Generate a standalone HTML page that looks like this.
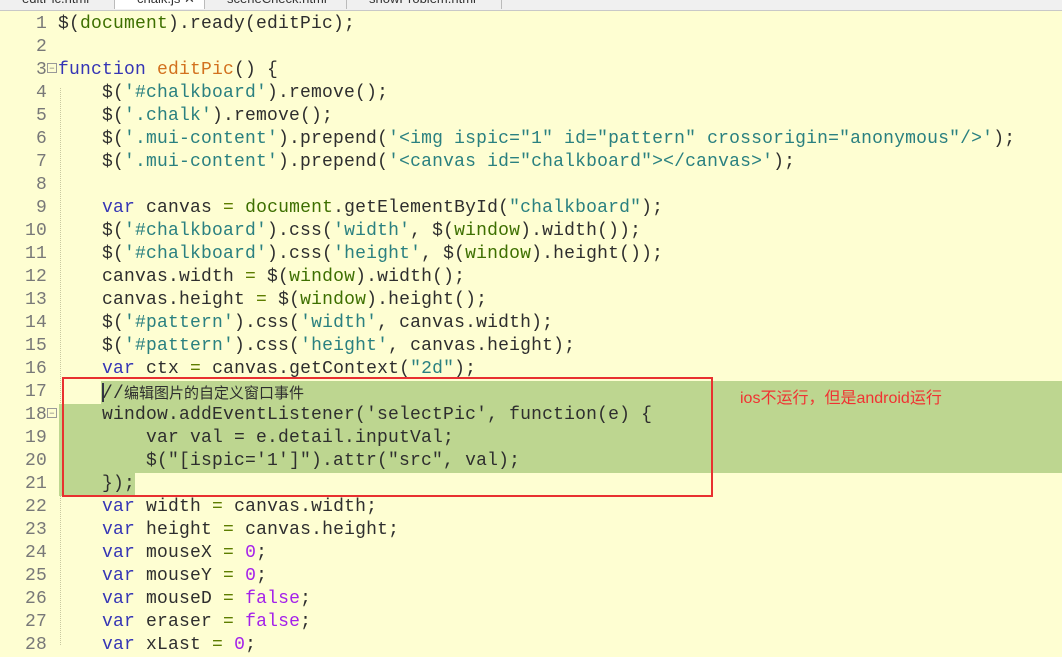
<!DOCTYPE html>
<html><head><meta charset="utf-8"><style>
body{margin:0;width:1062px;height:645px;overflow:hidden;background:#fefed2;position:relative;font-family:"Liberation Mono",monospace;}
.tabs{position:absolute;left:0;top:0;width:1062px;height:10px;background:#f0f0f0;border-bottom:1px solid #c8c8c8;overflow:hidden}
.tab{position:absolute;top:-9px;height:18px;font:13px "Liberation Sans",sans-serif;color:#333;border-right:1px solid #bbb;padding-left:22px;box-sizing:border-box}
.tab.a{background:#fff}
.l{position:absolute;left:0;height:23px;line-height:23px;font-size:18px;white-space:pre;letter-spacing:0.2px;color:#2e2e2e;width:1062px}
.n{display:inline-block;width:47px;text-align:right;color:#787878}
.c{position:absolute;left:58px;top:0}
.k{color:#3535b5}.s{color:#2a8080}.g{color:#3d6f00}.o{color:#5d7d00}.p{color:#a421ea}.f{color:#d2711e}
.hl{position:absolute;background:#bdd690}
.guide{position:absolute;left:60px;top:88px;height:557px;border-left:1px dotted #c8c8a0}
</style></head><body>
<div class="tabs">
<div class="tab" style="left:0;width:115px">editPic.html</div>
<div class="tab a" style="left:115px;width:90px">chalk.js ✕</div>
<div class="tab" style="left:205px;width:142px">sceneCheck.html</div>
<div class="tab" style="left:347px;width:155px">showProblem.html</div>
</div>
<div class="guide"></div>
<div class="hl" style="left:101px;top:381px;width:961px;height:23px"></div>
<div class="hl" style="left:59px;top:404px;width:1003px;height:69px"></div>
<div class="hl" style="left:59px;top:473px;width:76px;height:23px"></div>
<div style="position:absolute;left:102px;top:383px;width:2px;height:19px;background:#334"></div>
<div style="position:absolute;left:62px;top:377px;width:647px;height:116px;border:2px solid #e83030"></div>
<div style="position:absolute;left:740px;top:384px;font:16px 'Liberation Sans','Noto Sans CJK SC',sans-serif;color:#f03232">ios不运行，但是android运行</div>

<div class="l" style="top:13px"><span class="n">1</span><span class="c">$(<span class="g">document</span>).ready(editPic);</span></div>
<div class="l" style="top:36px"><span class="n">2</span></div>
<div class="l" style="top:59px"><span class="n">3</span><span style="position:absolute;left:47px;top:4px;font:9px sans-serif;color:#777;border:1px solid #999;width:8px;height:8px;line-height:8px;text-align:center">−</span><span class="c"><span class="k">function</span> <span class="f">editPic</span>() {</span></div>
<div class="l" style="top:82px"><span class="n">4</span><span class="c">    $(<span class="s">'#chalkboard'</span>).remove();</span></div>
<div class="l" style="top:105px"><span class="n">5</span><span class="c">    $(<span class="s">'.chalk'</span>).remove();</span></div>
<div class="l" style="top:128px"><span class="n">6</span><span class="c">    $(<span class="s">'.mui-content'</span>).prepend(<span class="s">'&lt;img ispic="1" id="pattern" crossorigin="anonymous"/&gt;'</span>);</span></div>
<div class="l" style="top:151px"><span class="n">7</span><span class="c">    $(<span class="s">'.mui-content'</span>).prepend(<span class="s">'&lt;canvas id="chalkboard"&gt;&lt;/canvas&gt;'</span>);</span></div>
<div class="l" style="top:174px"><span class="n">8</span></div>
<div class="l" style="top:197px"><span class="n">9</span><span class="c">    <span class="k">var</span> canvas <span class="o">=</span> <span class="g">document</span>.getElementById(<span class="s">"chalkboard"</span>);</span></div>
<div class="l" style="top:220px"><span class="n">10</span><span class="c">    $(<span class="s">'#chalkboard'</span>).css(<span class="s">'width'</span>, $(<span class="g">window</span>).width());</span></div>
<div class="l" style="top:243px"><span class="n">11</span><span class="c">    $(<span class="s">'#chalkboard'</span>).css(<span class="s">'height'</span>, $(<span class="g">window</span>).height());</span></div>
<div class="l" style="top:266px"><span class="n">12</span><span class="c">    canvas.width <span class="o">=</span> $(<span class="g">window</span>).width();</span></div>
<div class="l" style="top:289px"><span class="n">13</span><span class="c">    canvas.height <span class="o">=</span> $(<span class="g">window</span>).height();</span></div>
<div class="l" style="top:312px"><span class="n">14</span><span class="c">    $(<span class="s">'#pattern'</span>).css(<span class="s">'width'</span>, canvas.width);</span></div>
<div class="l" style="top:335px"><span class="n">15</span><span class="c">    $(<span class="s">'#pattern'</span>).css(<span class="s">'height'</span>, canvas.height);</span></div>
<div class="l" style="top:358px"><span class="n">16</span><span class="c">    <span class="k">var</span> ctx <span class="o">=</span> canvas.getContext(<span class="s">"2d"</span>);</span></div>
<div class="l" style="top:381px"><span class="n">17</span><span class="c">    //<span style="font-family:'Noto Sans CJK SC',sans-serif;font-size:15px;letter-spacing:0">编辑图片的自定义窗口事件</span></span></div>
<div class="l" style="top:404px"><span class="n">18</span><span style="position:absolute;left:47px;top:4px;font:9px sans-serif;color:#777;border:1px solid #999;width:8px;height:8px;line-height:8px;text-align:center">−</span><span class="c">    window.addEventListener('selectPic', function(e) {</span></div>
<div class="l" style="top:427px"><span class="n">19</span><span class="c">        var val = e.detail.inputVal;</span></div>
<div class="l" style="top:450px"><span class="n">20</span><span class="c">        $("[ispic='1']").attr("src", val);</span></div>
<div class="l" style="top:473px"><span class="n">21</span><span class="c">    });</span></div>
<div class="l" style="top:496px"><span class="n">22</span><span class="c">    <span class="k">var</span> width <span class="o">=</span> canvas.width;</span></div>
<div class="l" style="top:519px"><span class="n">23</span><span class="c">    <span class="k">var</span> height <span class="o">=</span> canvas.height;</span></div>
<div class="l" style="top:542px"><span class="n">24</span><span class="c">    <span class="k">var</span> mouseX <span class="o">=</span> <span class="p">0</span>;</span></div>
<div class="l" style="top:565px"><span class="n">25</span><span class="c">    <span class="k">var</span> mouseY <span class="o">=</span> <span class="p">0</span>;</span></div>
<div class="l" style="top:588px"><span class="n">26</span><span class="c">    <span class="k">var</span> mouseD <span class="o">=</span> <span class="p">false</span>;</span></div>
<div class="l" style="top:611px"><span class="n">27</span><span class="c">    <span class="k">var</span> eraser <span class="o">=</span> <span class="p">false</span>;</span></div>
<div class="l" style="top:634px"><span class="n">28</span><span class="c">    <span class="k">var</span> xLast <span class="o">=</span> <span class="p">0</span>;</span></div>
</body></html>
